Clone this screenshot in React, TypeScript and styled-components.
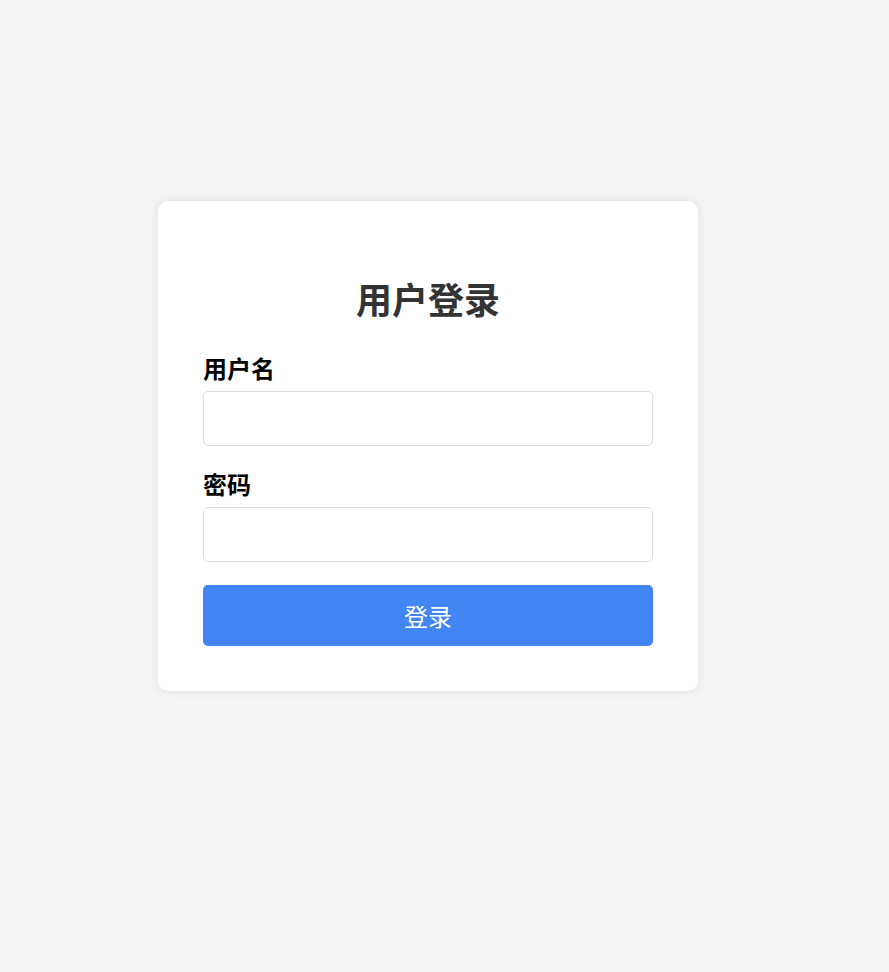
import styled, { createGlobalStyle } from "styled-components";

const GlobalStyle = createGlobalStyle`
    html, body {
        margin: 0;
        padding: 0;
        background: #f4f4f4;
        font-family: "Noto Sans", "Noto Sans CJK SC", sans-serif;
    }
    * {
        box-sizing: border-box;
    }
`

const Page = styled.div`
    min-height: 972px;
    padding: 201px 0 0 158px;
`
const Card = styled.form`
    width: 540px;
    padding: 45px;
    background: #fff;
    border-radius: 10px;
    box-shadow: 0 0 10px rgba(0, 0, 0, 0.1);
    display: flex;
    flex-direction: column;
`
const Title = styled.h2`
    margin: 33px 0 33px;
    font-size: 36px;
    line-height: 43px;
    font-weight: 700;
    color: #333;
    text-align: center;
`
const Field = styled.div`
    display: flex;
    flex-direction: column;
    margin-bottom: ${(p: { $last?: boolean }) => (p.$last ? "23px" : "25px")};
`
const Label = styled.label`
    font-size: 24px;
    line-height: 28px;
    font-weight: 700;
    color: #000;
    margin-bottom: 8px;
`
const Input = styled.input`
    height: 55px;
    width: 100%;
    padding: 0 12px;
    border: 1px solid #ddd;
    border-radius: 5px;
    font-size: 18px;
    font-family: inherit;
    outline: none;
`
const LoginButton = styled.button`
    height: 61px;
    width: 100%;
    border: none;
    border-radius: 5px;
    background: #4285f4;
    color: #fff;
    font-size: 24px;
    font-family: inherit;
    cursor: pointer;
`

export default function App() {
    return <>
        <GlobalStyle />
        <Page>
            <Card onSubmit={(e) => e.preventDefault()}>
                <Title>用户登录</Title>
                <Field>
                    <Label htmlFor="username">用户名</Label>
                    <Input id="username" type="text" />
                </Field>
                <Field $last>
                    <Label htmlFor="password">密码</Label>
                    <Input id="password" type="password" />
                </Field>
                <LoginButton type="submit">登录</LoginButton>
            </Card>
        </Page>
    </>
}
